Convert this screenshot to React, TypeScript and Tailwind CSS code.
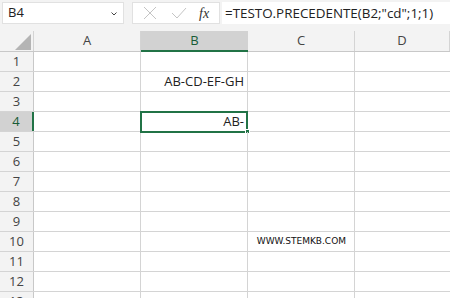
import React from "react";

const cols = [
  { name: "A", w: "w-[107px]" },
  { name: "B", w: "w-[107px]" },
  { name: "C", w: "w-[107px]" },
  { name: "D", w: "flex-1" },
];

const rows = [1, 2, 3, 4, 5, 6, 7, 8, 9, 10, 11, 12, 13];

export default function App() {
  return (
    <div className="w-[450px] h-[298px] overflow-hidden bg-white text-[13px] text-[#222]" style={{ fontFamily: "'Open Sans', 'Liberation Sans', sans-serif" }}>
      {/* formula bar */}
      <div className="h-[31px] bg-[#f3f3f3] flex items-start pt-[2px] pl-[2px]">
        <div className="w-[122px] h-[22px] bg-white border border-[#e1e1e1] flex items-center justify-between pl-[5px] pr-[5px]">
          <span>B4</span>
          <svg width="8" height="6" viewBox="0 0 8 6" className="mt-[1px]"><path d="M1.5 1.5 L4 4 L6.5 1.5" fill="none" stroke="#444" strokeWidth="1" /></svg>
        </div>
        <div className="ml-[8px] w-[88px] h-[22px] bg-white border border-[#e1e1e1] flex items-center">
          <svg width="14" height="14" viewBox="0 0 14 14" className="ml-[10px]"><path d="M1 1 L13 13 M13 1 L1 13" stroke="#c4c4c4" strokeWidth="1" /></svg>
          <svg width="16" height="12" viewBox="0 0 16 12" className="ml-[14px]"><path d="M1 6 L6 11 L15 1" fill="none" stroke="#c4c4c4" strokeWidth="1" /></svg>
          <span className="ml-[12px] italic text-[14px] text-[#333]" style={{ fontFamily: "'Liberation Serif', serif" }}>fx</span>
        </div>
        <div className="ml-[2px] flex-1 h-[22px] bg-white flex items-center pl-[3px] text-[13.4px]">
          =TESTO.PRECEDENTE(B2;"cd";1;1)
        </div>
      </div>
      {/* column headers */}
      <div className="flex h-[21px] bg-[#f3f3f3] border-b border-[#c8c8c8]">
        <div className="w-[34px] border-r border-[#d4d4d4] relative">
          <svg width="16" height="16" viewBox="0 0 16 16" className="absolute right-[2px] bottom-[1px]"><path d="M16 0 L16 16 L0 16 Z" fill="#b4b4b4" /></svg>
        </div>
        {cols.map((c) => (
          <div
            key={c.name}
            className={`${c.w} flex items-center justify-center ${c.name === "B" ? "bg-[#d2d2d2] text-[#185c37] border-b-2 border-[#217346] -mb-[1px]" : "text-[#444] border-r border-[#d4d4d4]"}`}
          >
            {c.name}
          </div>
        ))}
      </div>
      {/* rows */}
      {rows.map((r) => (
        <div key={r} className="flex h-[20px] border-b border-[#d4d4d4]">
          <div className={`w-[34px] flex items-center justify-center ${r === 4 ? "bg-[#d2d2d2] text-[#185c37] border-r-2 border-[#217346]" : "bg-[#f3f3f3] text-[#444] border-r border-[#c8c8c8]"}`}>
            {r}
          </div>
          <div className="w-[107px] border-r border-[#d4d4d4]" />
          <div className="w-[107px] border-r border-[#d4d4d4] relative flex items-center justify-end pr-[3px]">
            {r === 2 && <span>AB-CD-EF-GH</span>}
            {r === 4 && (
              <>
                <span>AB-</span>
                <div className="absolute left-[-1px] top-[-1px] w-[108px] h-[22px] border-2 border-[#217346]" />
                <div className="absolute right-[-3px] bottom-[-3px] w-[5px] h-[5px] bg-[#217346] border border-white" />
              </>
            )}
          </div>
          <div className="w-[107px] border-r border-[#d4d4d4] flex items-center justify-end pr-[8px]">
            {r === 10 && <span className="text-[9px] text-[#111]" style={{ fontFamily: "'DejaVu Sans', Verdana, sans-serif" }}>WWW.STEMKB.COM</span>}
          </div>
          <div className="flex-1" />
        </div>
      ))}
    </div>
  );
}
